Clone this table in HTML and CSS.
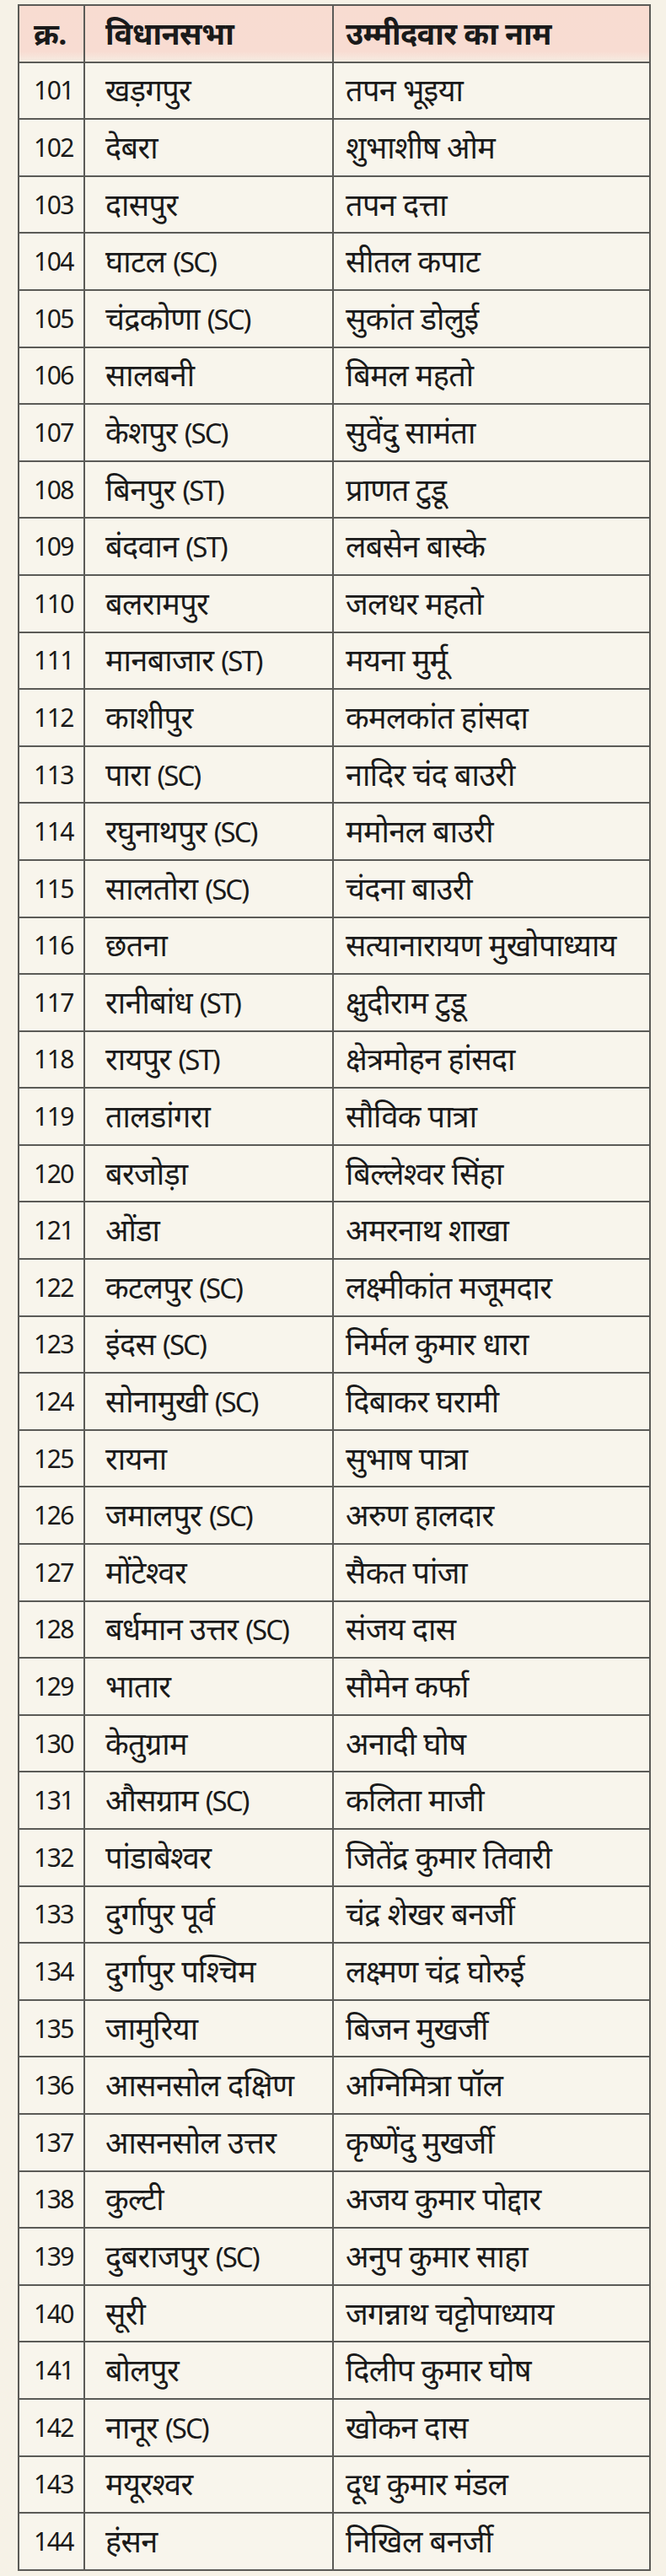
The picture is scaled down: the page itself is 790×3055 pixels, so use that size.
FILE: index.html
```html
<!DOCTYPE html>
<html lang="hi">
<head>
<meta charset="utf-8">
<title>उम्मीदवार सूची</title>
<link rel="stylesheet" href="styles.css">
</head>
<body>
<table class="list">
<colgroup><col class="c-num"><col class="c-seat"><col class="c-name"></colgroup>
<thead>
<tr class="head"><th class="num hd">क्र.</th><th class="seat">विधानसभा</th><th class="name">उम्मीदवार का नाम</th></tr>
</thead>
<tbody>
<tr><td class="num">101</td><td class="seat">खड़गपुर</td><td class="name">तपन भूइया</td></tr>
<tr><td class="num">102</td><td class="seat">देबरा</td><td class="name">शुभाशीष ओम</td></tr>
<tr><td class="num">103</td><td class="seat">दासपुर</td><td class="name">तपन दत्ता</td></tr>
<tr><td class="num">104</td><td class="seat">घाटल <span class="tag">(SC)</span></td><td class="name">सीतल कपाट</td></tr>
<tr><td class="num">105</td><td class="seat">चंद्रकोणा <span class="tag">(SC)</span></td><td class="name">सुकांत डोलुई</td></tr>
<tr><td class="num">106</td><td class="seat">सालबनी</td><td class="name">बिमल महतो</td></tr>
<tr><td class="num">107</td><td class="seat">केशपुर <span class="tag">(SC)</span></td><td class="name">सुवेंदु सामंता</td></tr>
<tr><td class="num">108</td><td class="seat">बिनपुर <span class="tag">(ST)</span></td><td class="name">प्राणत टुडू</td></tr>
<tr><td class="num">109</td><td class="seat">बंदवान <span class="tag">(ST)</span></td><td class="name">लबसेन बास्के</td></tr>
<tr><td class="num">110</td><td class="seat">बलरामपुर</td><td class="name">जलधर महतो</td></tr>
<tr><td class="num">111</td><td class="seat">मानबाजार <span class="tag">(ST)</span></td><td class="name">मयना मुर्मू</td></tr>
<tr><td class="num">112</td><td class="seat">काशीपुर</td><td class="name">कमलकांत हांसदा</td></tr>
<tr><td class="num">113</td><td class="seat">पारा <span class="tag">(SC)</span></td><td class="name">नादिर चंद बाउरी</td></tr>
<tr><td class="num">114</td><td class="seat">रघुनाथपुर <span class="tag">(SC)</span></td><td class="name">ममोनल बाउरी</td></tr>
<tr><td class="num">115</td><td class="seat">सालतोरा <span class="tag">(SC)</span></td><td class="name">चंदना बाउरी</td></tr>
<tr><td class="num">116</td><td class="seat">छतना</td><td class="name">सत्यानारायण मुखोपाध्याय</td></tr>
<tr><td class="num">117</td><td class="seat">रानीबांध <span class="tag">(ST)</span></td><td class="name">क्षुदीराम टुडू</td></tr>
<tr><td class="num">118</td><td class="seat">रायपुर <span class="tag">(ST)</span></td><td class="name">क्षेत्रमोहन हांसदा</td></tr>
<tr><td class="num">119</td><td class="seat">तालडांगरा</td><td class="name">सौविक पात्रा</td></tr>
<tr><td class="num">120</td><td class="seat">बरजोड़ा</td><td class="name">बिल्लेश्वर सिंहा</td></tr>
<tr><td class="num">121</td><td class="seat">ओंडा</td><td class="name">अमरनाथ शाखा</td></tr>
<tr><td class="num">122</td><td class="seat">कटलपुर <span class="tag">(SC)</span></td><td class="name">लक्ष्मीकांत मजूमदार</td></tr>
<tr><td class="num">123</td><td class="seat">इंदस <span class="tag">(SC)</span></td><td class="name">निर्मल कुमार धारा</td></tr>
<tr><td class="num">124</td><td class="seat">सोनामुखी <span class="tag">(SC)</span></td><td class="name">दिबाकर घरामी</td></tr>
<tr><td class="num">125</td><td class="seat">रायना</td><td class="name">सुभाष पात्रा</td></tr>
<tr><td class="num">126</td><td class="seat">जमालपुर <span class="tag">(SC)</span></td><td class="name">अरुण हालदार</td></tr>
<tr><td class="num">127</td><td class="seat">मोंटेश्वर</td><td class="name">सैकत पांजा</td></tr>
<tr><td class="num">128</td><td class="seat">बर्धमान उत्तर <span class="tag">(SC)</span></td><td class="name">संजय दास</td></tr>
<tr><td class="num">129</td><td class="seat">भातार</td><td class="name">सौमेन कर्फा</td></tr>
<tr><td class="num">130</td><td class="seat">केतुग्राम</td><td class="name">अनादी घोष</td></tr>
<tr><td class="num">131</td><td class="seat">औसग्राम <span class="tag">(SC)</span></td><td class="name">कलिता माजी</td></tr>
<tr><td class="num">132</td><td class="seat">पांडाबेश्वर</td><td class="name">जितेंद्र कुमार तिवारी</td></tr>
<tr><td class="num">133</td><td class="seat">दुर्गापुर पूर्व</td><td class="name">चंद्र शेखर बनर्जी</td></tr>
<tr><td class="num">134</td><td class="seat">दुर्गापुर पश्चिम</td><td class="name">लक्ष्मण चंद्र घोरुई</td></tr>
<tr><td class="num">135</td><td class="seat">जामुरिया</td><td class="name">बिजन मुखर्जी</td></tr>
<tr><td class="num">136</td><td class="seat">आसनसोल दक्षिण</td><td class="name">अग्निमित्रा पॉल</td></tr>
<tr><td class="num">137</td><td class="seat">आसनसोल उत्तर</td><td class="name">कृष्णेंदु मुखर्जी</td></tr>
<tr><td class="num">138</td><td class="seat">कुल्टी</td><td class="name">अजय कुमार पोद्दार</td></tr>
<tr><td class="num">139</td><td class="seat">दुबराजपुर <span class="tag">(SC)</span></td><td class="name">अनुप कुमार साहा</td></tr>
<tr><td class="num">140</td><td class="seat">सूरी</td><td class="name">जगन्नाथ चट्टोपाध्याय</td></tr>
<tr><td class="num">141</td><td class="seat">बोलपुर</td><td class="name">दिलीप कुमार घोष</td></tr>
<tr><td class="num">142</td><td class="seat">नानूर <span class="tag">(SC)</span></td><td class="name">खोकन दास</td></tr>
<tr><td class="num">143</td><td class="seat">मयूरश्वर</td><td class="name">दूध कुमार मंडल</td></tr>
<tr><td class="num">144</td><td class="seat">हंसन</td><td class="name">निखिल बनर्जी</td></tr>
</tbody>
</table>
</body>
</html>
```
FILE: styles.css
```css
html, body {
  margin: 0;
  padding: 0;
  background: #f6f2e7;
}
body {
  padding: 5px 20px 0 21px;
  font-family: "Noto Sans", "Noto Sans Devanagari", sans-serif;
  color: #1a1a1a;
}
.list {
  border-collapse: collapse;
  width: 749px;
  table-layout: fixed;
  background: #f8f5ec;
}
.c-num { width: 78px; }
.c-seat { width: 295px; }
.c-name { width: 376px; }
.list th, .list td {
  border: 2px solid #5b5b57;
  height: 65.6px;
  padding: 0;
  text-align: left;
  vertical-align: middle;
  font-size: 36px;
  line-height: 1;
  white-space: nowrap;
  font-weight: 400;
  letter-spacing: -0.6px;
}
.list .head th {
  font-weight: 700;
  background: linear-gradient(#f8dcd1 0%, #f8dcd2 82%, #f6ece2 100%);
}
.list td.num {
  font-size: 30px;
  letter-spacing: -1.5px;
  padding-left: 17px;
}
.list .tag {
  font-size: 33px;
  letter-spacing: -2px;
}
.list .seat { padding-left: 24px; }
.list .name { padding-left: 14px; }
.list .hd { padding-left: 17px; }
```
